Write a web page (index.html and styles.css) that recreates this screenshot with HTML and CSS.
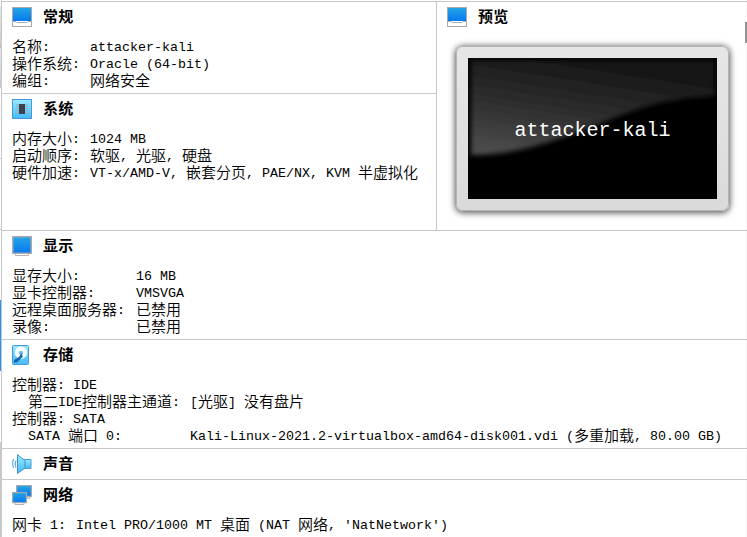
FILE: index.html
```html
<!DOCTYPE html>
<html lang="zh-CN">
<head>
<meta charset="utf-8">
<title>attacker-kali</title>
<link rel="stylesheet" href="styles.css">
</head>
<body>
<svg class="defs" width="0" height="0" aria-hidden="true">
  <defs>
    <linearGradient id="screen" x2="0" y2="1"><stop stop-color="#23a5e7"/><stop offset="1" stop-color="#0879ee"/></linearGradient>
    <linearGradient id="cyan" x2="0" y2="1"><stop stop-color="#9aeafe"/><stop offset="1" stop-color="#45baf6"/></linearGradient>
    <symbol id="machine" viewBox="0 0 20 20">
      <rect x=".5" y=".5" width="19" height="19" fill="#fff" stroke="#aaa9ae"/>
      <rect x="1" y="1" width="18" height="13" fill="url(#screen)"/>
      <path d="M1 14.5h3l1 1h10l1-1h3" fill="none" stroke="#aaa9ae"/>
    </symbol>
  </defs>
</svg>
<div class="window">
  <div class="edge"></div>
  <main class="details">
    <div class="top">
      <div class="left">
        <section class="general">
          <h2><svg class="icon"><use href="#machine"/></svg>常规</h2>
          <dl class="w78">
            <dt><b>名称</b>:</dt><dd>attacker-kali</dd>
            <dt><b>操作系统</b>:</dt><dd>Oracle (64-bit)</dd>
            <dt><b>编组</b>:</dt><dd><b>网络安全</b></dd>
          </dl>
        </section>
        <section class="system">
          <h2><svg class="icon" viewBox="0 0 20 20"><rect x=".5" y=".5" width="19" height="19" fill="url(#cyan)" stroke="#4799db"/><path d="M4 5.5h12M4 7.5h12M4 9.5h12M4 11.5h12M4 13.5h12" stroke="#8fb4c4"/><path d="M7 5h6v10H7z" fill="#3c4250"/></svg>系统</h2>
          <dl class="w78">
            <dt><b>内存大小</b>:</dt><dd>1024 MB</dd>
            <dt><b>启动顺序</b>:</dt><dd><b>软驱</b>, <b>光驱</b>, <b>硬盘</b></dd>
            <dt><b>硬件加速</b>:</dt><dd>VT-x/AMD-V, <b>嵌套分页</b>, PAE/NX, KVM <b>半虚拟化</b></dd>
          </dl>
        </section>
      </div>
      <section class="preview">
        <h2><svg class="icon"><use href="#machine"/></svg>预览</h2>
        <div class="monitor">
          <div class="screen">
            <svg class="gloss" viewBox="0 0 249 141" aria-hidden="true">
              <defs>
                <linearGradient id="gl" x1=".1" y1="1" x2=".5" y2="0"><stop stop-color="#4e4e4e"/><stop offset=".45" stop-color="#303030"/><stop offset="1" stop-color="#151515"/></linearGradient>
                <filter id="soft"><feGaussianBlur stdDeviation="2.500"/></filter>
              </defs>
              <path d="M3 2H247V38C207 40 185 45 151 58C99 79 55 97 3 97Z" fill="url(#gl)" filter="url(#soft)"/>
            </svg>
            <span>attacker-kali</span>
          </div>
        </div>
      </section>
    </div>
    <section class="display">
      <h2><svg class="icon" viewBox="0 0 20 20"><path d="M3.500 16.500h13v3h-13z" fill="#fff" stroke="#b3b3b6"/><rect x=".75" y=".75" width="18.500" height="16.500" fill="url(#screen)" stroke="#aaa9ae" stroke-width="1.500"/></svg>显示</h2>
      <dl class="w124">
        <dt><b>显存大小</b>:</dt><dd>16 MB</dd>
        <dt><b>显卡控制器</b>:</dt><dd>VMSVGA</dd>
        <dt><b>远程桌面服务器</b>:</dt><dd><b>已禁用</b></dd>
        <dt><b>录像</b>:</dt><dd><b>已禁用</b></dd>
      </dl>
    </section>
    <section class="storage">
      <h2><svg class="icon" viewBox="0 0 20 20"><rect x=".5" y=".5" width="16" height="19" rx="1" fill="url(#cyan)" stroke="#4799db"/><circle cx="9" cy="7.700" r="6.200" fill="#f5fbff"/><circle cx="9" cy="7.700" r="2" fill="#62bff0"/><path d="M9.500 8l1.300 3.500L5 17.500H2V15l5-3z" fill="#1764b5"/></svg>存储</h2>
      <dl class="w178">
        <dt><b>控制器</b>: IDE</dt><dd></dd>
        <dt class="sub"><b>第二</b>IDE<b>控制器主通道</b>:</dt><dd>[<b>光驱</b>] <b>没有盘片</b></dd>
        <dt><b>控制器</b>: SATA</dt><dd></dd>
        <dt class="sub">SATA <b>端口</b> 0:</dt><dd>Kali-Linux-2021.2-virtualbox-amd64-disk001.vdi (<b>多重加载</b>, 80.00 GB)</dd>
      </dl>
    </section>
    <section class="audio">
      <h2><svg class="icon" viewBox="0 0 20 20"><path d="M12 5.500h7v9h-7z" fill="url(#cyan)" stroke="#4b9ddb"/><path d="M5.500.7L13 6.500v7.500l-7.500 5.500z" fill="url(#cyan)" stroke="#4190d0"/><path d="M1.700 5q-2 4.500 0 9M4 6.500q-1.500 3.500 0 7" fill="none" stroke="#65a9dc" stroke-width="1.200"/></svg>声音</h2>
    </section>
    <section class="network">
      <h2><svg class="icon" viewBox="0 0 20 20"><rect x="4.600" y=".6" width="14.800" height="10.800" fill="url(#screen)" stroke="#a5a8ad" stroke-width="1.200"/><path d="M14 12h4v1.500h-4z" fill="#eee" stroke="#aaa" stroke-width=".7"/><path d="M3 17.500h9v2H3z" fill="#fff" stroke="#b3b3b6"/><rect x=".6" y="7.600" width="13.800" height="10" fill="url(#screen)" stroke="#a5a8ad" stroke-width="1.200"/></svg>网络</h2>
      <dl class="w64">
        <dt><b>网卡</b> 1:</dt><dd>Intel PRO/1000 MT <b>桌面</b> (NAT <b>网络</b>, 'NatNetwork')</dd>
      </dl>
    </section>
  </main>
  <div class="scroll"></div>
</div>
</body>
</html>
```
FILE: styles.css
```css
* { box-sizing: border-box; }
body { margin: 0; background: #fff; color: #000; overflow: hidden; }
.defs { position: absolute; }
.window { position: relative; display: flex; width: 747px; height: 537px; overflow: hidden; }
.edge {
  width: 1px;
  background: linear-gradient(#fff 0 6px, #e6e6e6 6px, #c9c9c9 46px, #aaa 46px 47px, #e6e6e6 48px, #c9c9c9 88px, #fff 88px 158px, #c8c8c8 158px 159px, #fff 159px 229px, #c8c8c8 229px 230px, #fff 230px 300px, #2294fb 300px 371px, #fff 371px 442px, #c8c8c8 442px);
}
.details { flex: 1; min-width: 0; border-left: 1px solid #c8c8c8; padding-top: 1px; }
.top { display: flex; height: 229px; }
.left { width: 434px; }
section { border-top: 1px solid #c8c8c8; padding-left: 10px; }
.general { height: 92px; }
.system { height: 137px; }
.preview { flex: 1; border-left: 1px solid #c8c8c8; }
.display, .storage { height: 109px; }
.audio { height: 31px; }
.network { height: 58px; }
h2 {
  display: flex;
  align-items: center;
  gap: 11px;
  height: 30px;
  margin: 0;
  font: bold 15px/18px "Noto Sans CJK SC", sans-serif;
  letter-spacing: .2px;
  padding-bottom: 2px;
}
.icon { width: 20px; height: 20px; flex: none; position: relative; top: 1px; }
dl {
  display: grid;
  grid-auto-rows: 17px;
  margin: 7px 0 0;
  font: 13.33px/17px "Liberation Mono", monospace;
  white-space: pre;
}
dt, dd { margin: 0; height: 17px; }
b { font: 15px/0 "Noto Sans CJK SC", sans-serif; font-weight: 350; vertical-align: -1px; }
.w64 { grid-template-columns: 64px 1fr; }
.w78 { grid-template-columns: 78px 1fr; }
.w124 { grid-template-columns: 124px 1fr; }
.w178 { grid-template-columns: 178px 1fr; }
.sub { padding-left: 16px; }
.monitor {
  width: 273px;
  height: 165px;
  margin: 14px 0 0 9px;
  padding: 11px;
  border: 1px solid #b4b4b4;
  border-radius: 7px;
  background: linear-gradient(#e6e6e6, #dadada);
  box-shadow: 0 1px 6px 1px rgba(0, 0, 0, .65);
}
.screen { display: grid; place-items: center; width: 249px; height: 141px; background: #000; overflow: hidden; }
.screen > * { grid-area: 1 / 1; }
.screen span { color: #fff; font: 20px/24px "Liberation Mono", monospace; z-index: 1; padding-top: 4px; }
.gloss { width: 249px; height: 141px; }
.scroll { position: absolute; right: 0; top: 0; width: 2px; height: 537px; background: linear-gradient(rgba(0, 0, 0, .02) 22px, #929292 22px 43px, rgba(0, 0, 0, .02) 43px); }
```
